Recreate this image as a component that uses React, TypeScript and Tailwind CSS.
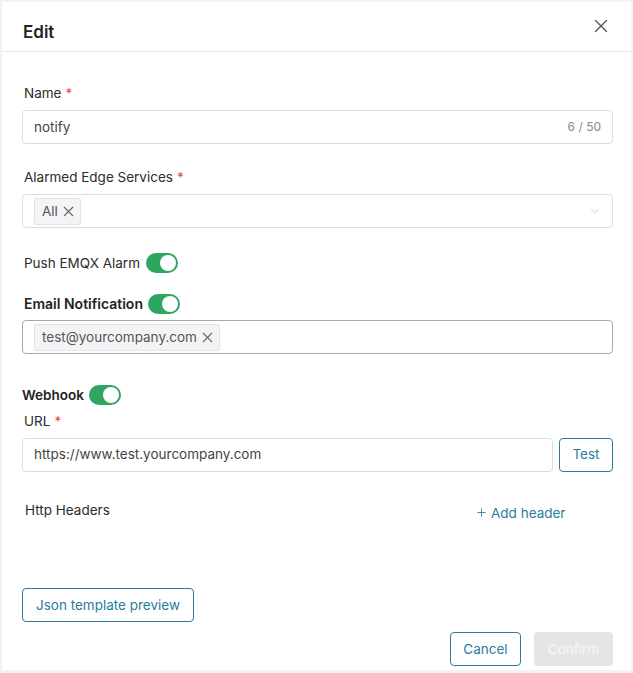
import { X, ChevronDown, Plus } from "lucide-react";

function Toggle() {
  return (
    <span className="inline-flex items-center w-[32px] h-[20px] rounded-full bg-[#2ea65f] p-[2px] justify-end">
      <span className="w-[16px] h-[16px] rounded-full bg-white" />
    </span>
  );
}

function Label({ text, required }: { text: string; required?: boolean }) {
  return (
    <div className="text-[13.5px] text-[#2b2b2b] leading-[20px]">
      {text}
      {required && <span className="text-[#e5484d] ml-[4px]">*</span>}
    </div>
  );
}

function Tag({ text }: { text: string }) {
  return (
    <span className="inline-flex items-center gap-[2px] h-[27px] pl-[7px] pr-[3px] bg-[#f4f4f6] border border-[#e4e4e8] rounded-[2px] text-[13.5px] text-[#555]">
      {text}
      <X className="w-[17px] h-[17px] text-[#666]" strokeWidth={1.6} />
    </span>
  );
}

export default function App() {
  return (
    <div
      className="w-[633px] h-[673px] bg-[#f3f3f3] p-[2px] pb-[3px]"
      style={{ fontFamily: "Inter, 'Liberation Sans', sans-serif" }}
    >
      <div className="w-full h-full bg-white flex flex-col">
        {/* header */}
        <div className="shrink-0 h-[50px] border-b border-[#e8e8ee] flex items-center justify-between pl-[21px] pr-[19px]">
          <span className="text-[17px] font-semibold text-[#222] mt-[12px]">Edit</span>
          <X className="w-[22px] h-[22px] text-[#555] -mt-[2px]" strokeWidth={1.5} />
        </div>

        {/* body */}
        <div className="flex-1 flex flex-col pl-[20px] pr-[18px] pt-[31px]">
          <div className="pl-[2px]">
            <Label text="Name" required />
          </div>
          <div className="mt-[7px] h-[34px] border border-[#dcdce4] rounded-[4px] flex items-center justify-between px-[11px]">
            <span className="text-[13.5px] text-[#444]">notify</span>
            <span className="text-[12px] text-[#888]">6 / 50</span>
          </div>

          <div className="mt-[23px] pl-[2px]">
            <Label text="Alarmed Edge Services" required />
          </div>
          <div className="mt-[7px] h-[34px] border border-[#dcdce4] rounded-[4px] flex items-center justify-between pl-[11px] pr-[10px]">
            <Tag text="All" />
            <ChevronDown className="w-[14px] h-[14px] text-[#c8c8cc]" strokeWidth={1.5} />
          </div>

          <div className="mt-[25px] pl-[2px] flex items-center gap-[6px]">
            <span className="text-[13.5px] text-[#2b2b2b]">Push EMQX Alarm</span>
            <Toggle />
          </div>

          <div className="mt-[20px] pl-[2px] flex items-center gap-[5px]">
            <span className="text-[14px] font-semibold text-[#222]">Email Notification</span>
            <Toggle />
          </div>
          <div className="mt-[6px] h-[34px] border border-[#a9a9ad] rounded-[4px] flex items-center pl-[11px]">
            <Tag text="test@yourcompany.com" />
          </div>

          <div className="mt-[31px] flex items-center gap-[5px]">
            <span className="text-[13.5px] font-semibold text-[#222]">Webhook</span>
            <Toggle />
          </div>
          <div className="mt-[5px] pl-[2px]">
            <Label text="URL" required />
          </div>
          <div className="mt-[7px] flex gap-[6px]">
            <div className="flex-1 h-[34px] border border-[#dcdce4] rounded-[4px] flex items-center px-[11px]">
              <span className="text-[13.5px] text-[#444]">https://www.test.yourcompany.com</span>
            </div>
            <button className="w-[54px] h-[34px] border border-[#2b7b9b] rounded-[4px] text-[13.5px] text-[#2b7b9b]">
              Test
            </button>
          </div>

          <div className="mt-[25px] flex items-center pl-[3px]">
            <span className="text-[13.5px] text-[#2b2b2b] w-[450px]">Http Headers</span>
            <span className="flex items-center gap-[3px] text-[13.5px] text-[#2b7b9b] mt-[6px]">
              <Plus className="w-[13px] h-[13px]" strokeWidth={1.6} />
              Add header
            </span>
          </div>

          <div className="mt-[65px]">
            <button className="h-[34px] px-[13px] border border-[#2b7b9b] rounded-[4px] text-[13.5px] text-[#2b7b9b]">
              Json template preview
            </button>
          </div>

          <div className="mt-[10px] flex justify-end gap-[13px]">
            <button className="w-[71px] h-[34px] border border-[#2b7b9b] rounded-[4px] text-[13.5px] text-[#2b7b9b]">
              Cancel
            </button>
            <button className="w-[79px] h-[34px] bg-[#e5e5e7] rounded-[4px] text-[13.5px] text-[#f8f8f8]">
              Confirm
            </button>
          </div>
        </div>
      </div>
    </div>
  );
}
